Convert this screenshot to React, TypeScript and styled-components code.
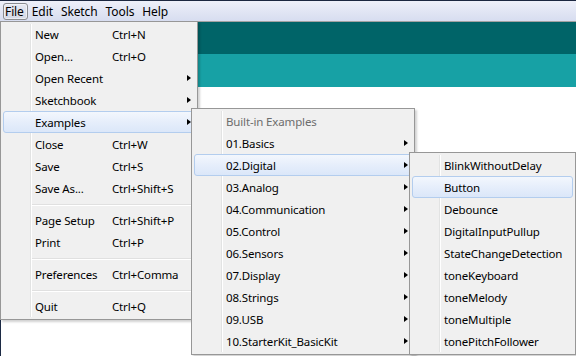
import styled, { createGlobalStyle, css } from 'styled-components';

const GlobalStyle = createGlobalStyle`
  html, body {
    margin: 0;
    padding: 0;
    background: #ffffff;
  }
  body {
    font-family: "Noto Sans", "Open Sans", "Liberation Sans", sans-serif;
    font-size: 11.5px;
    letter-spacing: -0.15px;
    color: #000;
  }
`;

interface MenuEntry {
  label?: string;
  shortcut?: string;
  sub?: boolean;
  active?: boolean;
  header?: boolean;
  separator?: boolean;
}

const fileItems: MenuEntry[] = [
  { label: 'New', shortcut: 'Ctrl+N' },
  { label: 'Open...', shortcut: 'Ctrl+O' },
  { label: 'Open Recent', sub: true },
  { label: 'Sketchbook', sub: true },
  { label: 'Examples', sub: true, active: true },
  { label: 'Close', shortcut: 'Ctrl+W' },
  { label: 'Save', shortcut: 'Ctrl+S' },
  { label: 'Save As...', shortcut: 'Ctrl+Shift+S' },
  { separator: true },
  { label: 'Page Setup', shortcut: 'Ctrl+Shift+P' },
  { label: 'Print', shortcut: 'Ctrl+P' },
  { separator: true },
  { label: 'Preferences', shortcut: 'Ctrl+Comma' },
  { separator: true },
  { label: 'Quit', shortcut: 'Ctrl+Q' },
];

const exampleItems: MenuEntry[] = [
  { label: 'Built-in Examples', header: true },
  { label: '01.Basics', sub: true },
  { label: '02.Digital', sub: true, active: true },
  { label: '03.Analog', sub: true },
  { label: '04.Communication', sub: true },
  { label: '05.Control', sub: true },
  { label: '06.Sensors', sub: true },
  { label: '07.Display', sub: true },
  { label: '08.Strings', sub: true },
  { label: '09.USB', sub: true },
  { label: '10.StarterKit_BasicKit', sub: true },
];

const digitalItems: MenuEntry[] = [
  { label: 'BlinkWithoutDelay' },
  { label: 'Button', active: true },
  { label: 'Debounce' },
  { label: 'DigitalInputPullup' },
  { label: 'StateChangeDetection' },
  { label: 'toneKeyboard' },
  { label: 'toneMelody' },
  { label: 'toneMultiple' },
  { label: 'tonePitchFollower' },
];

const topMenus = ['File', 'Edit', 'Sketch', 'Tools', 'Help'];

const Menu = ({ items, $left, $top, $width, $shortcutAt }: {
  items: MenuEntry[];
  $left: number;
  $top: number;
  $width: number;
  $shortcutAt?: number;
}) => {
  return (
    <MenuPanel $left={$left} $top={$top} $width={$width}>
      {items.map((item, index) =>
        item.separator ? (
          <Separator key={index} />
        ) : (
          <MenuRow key={index} $active={item.active}>
            <RowLabel $header={item.header} $width={$shortcutAt}>
              {item.label}
            </RowLabel>
            {item.shortcut && <Shortcut>{item.shortcut}</Shortcut>}
            {item.sub && <Arrow />}
          </MenuRow>
        )
      )}
    </MenuPanel>
  );
};

const App = () => {
  return (
    <>
      <GlobalStyle />
      <Window>
        <MenuBar>
          {topMenus.map((name) => (
            <BarItem key={name} $open={name === 'File'}>
              {name}
            </BarItem>
          ))}
        </MenuBar>
        <Editor>
          <ToolbarBand />
          <HeaderBand />
          <TextArea />
        </Editor>
        <Menu items={fileItems} $left={0} $top={21} $width={198} $shortcutAt={77} />
        <Menu items={exampleItems} $left={191} $top={108} $width={224} />
        <Menu items={digitalItems} $left={409} $top={152} $width={167} />
      </Window>
    </>
  );
};

const Window = styled.div`
  position: relative;
  width: 576px;
  height: 356px;
  overflow: hidden;
  display: flex;
  flex-direction: column;
  background: #ffffff;
`;

const MenuBar = styled.div`
  height: 21px;
  flex: none;
  display: flex;
  align-items: center;
  padding-left: 3px;
  box-sizing: border-box;
  border-top: 1px solid #1c2740;
  background: linear-gradient(to bottom, #eef0f9 0%, #e2e6f4 50%, #d7ddf0 100%);
  font-size: 12px;
  letter-spacing: -0.1px;
`;

const BarItem = styled.div<{ $open?: boolean }>`
  height: 17px;
  line-height: 15px;
  padding: 0 2px 0 1px;
  margin-right: 3px;
  box-sizing: border-box;
  border: 1px solid transparent;
  border-radius: 3px;
  ${({ $open }) =>
    $open &&
    css`
      padding: 0 3px 0 1px;
      margin-right: 2px;
      border-color: #8a8c91;
      background: linear-gradient(to bottom, #e6e9f3, #d5d9e6);
      box-shadow: inset 0 0 0 1px rgba(255, 255, 255, 0.5);
    `}
`;

const Editor = styled.div`
  flex: 1;
  display: flex;
  flex-direction: column;
  border-top: 1px solid #a2a2a2;
  border-left: 1px solid #1c2a44;
`;

const ToolbarBand = styled.div`
  height: 32px;
  background: #006468;
`;

const HeaderBand = styled.div`
  height: 33px;
  background: #17a1a5;
`;

const TextArea = styled.div`
  flex: 1;
  background: #ffffff;
`;

const MenuPanel = styled.div<{ $left: number; $top: number; $width: number }>`
  position: absolute;
  left: ${({ $left }) => $left}px;
  top: ${({ $top }) => $top}px;
  width: ${({ $width }) => $width}px;
  box-sizing: border-box;
  padding: 1px 2px 2px 2px;
  background: #f0f0f0;
  border: 1px solid #979797;
  box-shadow: 2px 2px 2px rgba(0, 0, 0, 0.18);

  &::before {
    content: '';
    position: absolute;
    top: 2px;
    bottom: 2px;
    left: 29px;
    width: 1px;
    background: #e2e3e3;
    box-shadow: 1px 0 0 #ffffff;
  }
`;

const MenuRow = styled.div<{ $active?: boolean }>`
  position: relative;
  height: 22px;
  display: flex;
  align-items: center;
  padding-left: 31px;
  box-sizing: border-box;
  border: 1px solid transparent;
  border-radius: 3px;
  white-space: nowrap;
  ${({ $active }) =>
    $active &&
    css`
      border-color: #b3cdee;
      background: linear-gradient(to bottom, #f3f7fd 0%, #e6eefb 50%, #dbe7f9 100%);
    `}
`;

const RowLabel = styled.span<{ $header?: boolean; $width?: number }>`
  color: ${({ $header }) => ($header ? '#6d6d6d' : '#000000')};
  ${({ $width }) => $width && `width: ${$width}px;`}
`;

const Shortcut = styled.span`
  color: #000000;
`;

const Arrow = styled.span`
  position: absolute;
  right: 3px;
  top: 7px;
  width: 0;
  height: 0;
  border-top: 3.5px solid transparent;
  border-bottom: 3.5px solid transparent;
  border-left: 4px solid #000000;
`;

const Separator = styled.div`
  height: 10px;
  margin-left: 29px;
  display: flex;
  align-items: center;

  &::after {
    content: '';
    flex: 1;
    height: 1px;
    background: #e0e0e0;
    box-shadow: 0 1px 0 #ffffff;
  }
`;

export default App;
